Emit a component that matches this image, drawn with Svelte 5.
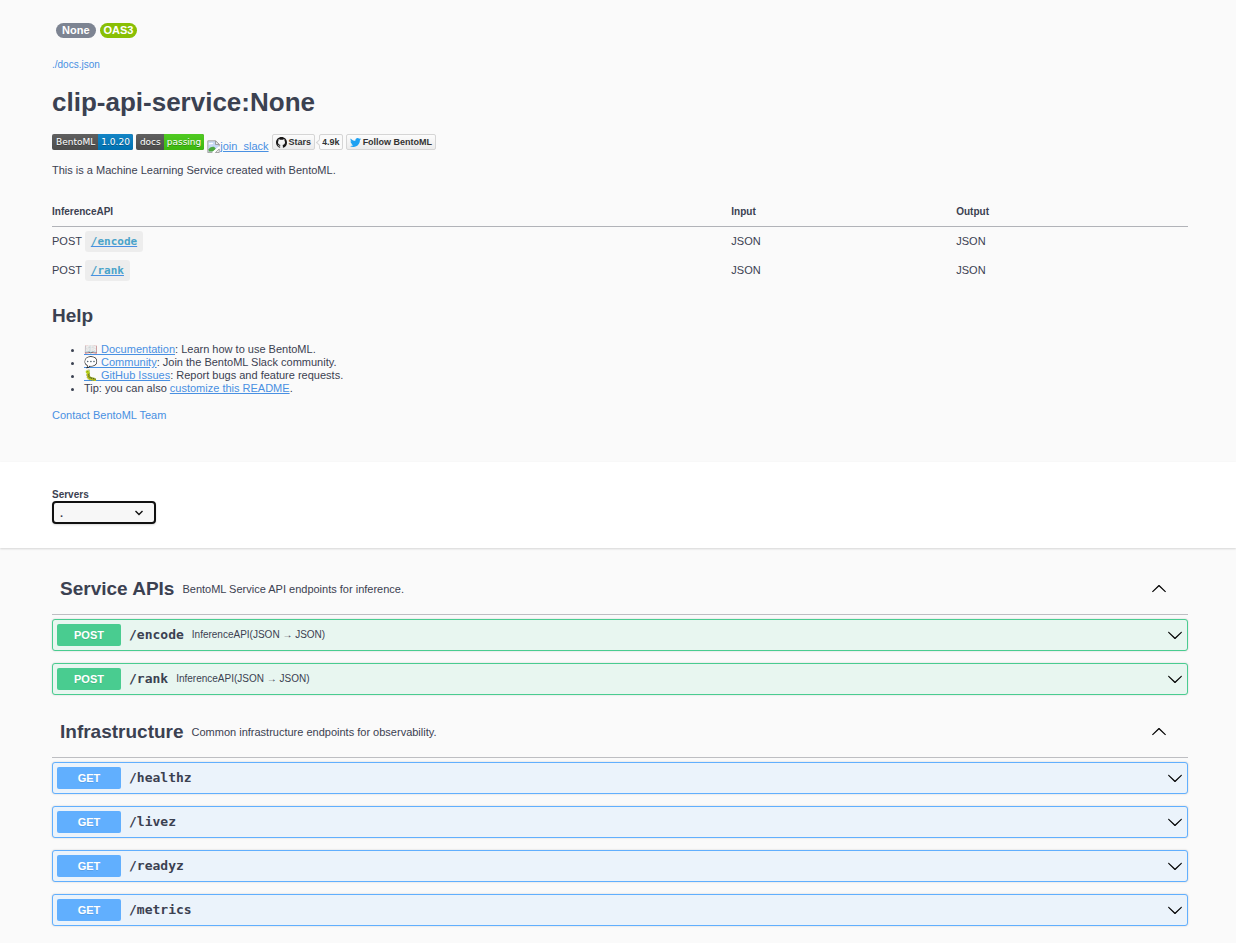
<script>
  const inference = [
    { method: 'POST', path: '/encode', input: 'JSON', output: 'JSON' },
    { method: 'POST', path: '/rank', input: 'JSON', output: 'JSON' },
  ];

  const help = [
    { before: '', link: '📖 Documentation', after: ': Learn how to use BentoML.' },
    { before: '', link: '💬 Community', after: ': Join the BentoML Slack community.' },
    { before: '', link: '🐛 GitHub Issues', after: ': Report bugs and feature requests.' },
    { before: 'Tip: you can also ', link: 'customize this README', after: '.' },
  ];

  let tags = $state([
    {
      name: 'Service APIs',
      description: 'BentoML Service API endpoints for inference.',
      open: true,
      operations: [
        { method: 'POST', path: '/encode', summary: 'InferenceAPI(JSON → JSON)' },
        { method: 'POST', path: '/rank', summary: 'InferenceAPI(JSON → JSON)' },
      ],
    },
    {
      name: 'Infrastructure',
      description: 'Common infrastructure endpoints for observability.',
      open: true,
      operations: [
        { method: 'GET', path: '/healthz', summary: '' },
        { method: 'GET', path: '/livez', summary: '' },
        { method: 'GET', path: '/readyz', summary: '' },
        { method: 'GET', path: '/metrics', summary: '' },
      ],
    },
  ]);
</script>

{#snippet chevron(up)}
  <svg class="chevron" class:up viewBox="0 0 20 20" width="16" height="16" aria-hidden="true">
    <path
      d="M17.418 6.109c.272-.268.709-.268.979 0s.271.701 0 .969l-7.908 7.83c-.27.268-.707.268-.979 0l-7.908-7.83c-.27-.268-.27-.701 0-.969.271-.268.709-.268.979 0L10 13.25l7.418-7.141z"
    />
  </svg>
{/snippet}

<main>
  <section class="info wrap">
    <div class="versions">
      <span class="pill">None</span>
      <span class="pill oas">OAS3</span>
    </div>
    <a class="spec" href="#docs">./docs.json</a>
    <h1>clip-api-service:None</h1>

    <div class="badges">
      <a class="shield" href="#pypi"><span>BentoML</span><span class="blue">1.0.20</span></a>
      <a class="shield" href="#docs"><span>docs</span><span class="green">passing</span></a>
      <a class="slack" href="#slack"
        ><svg viewBox="0 0 16 16" width="13" height="13" aria-hidden="true">
          <path d="M1.5 1.5h9l4 4v3l-7 6h-6z" fill="#c8d9f5" />
          <path d="M2 5.5c0-1.500 1.500-2 2.500-1.500C5.500 3 7.500 3.500 7.500 5z" fill="#fff" />
          <path d="M2 14v-2.500C4 8.500 6.500 8 9 8.500l2 2.500-3.500 3z" fill="#4ea83f" />
          <path d="M1 15.500V1h9.500L15 5.500V8" fill="none" stroke="#8d8d8d" />
          <path d="M10.500 1v4.500H15z" fill="#f4f4f4" stroke="#8d8d8d" />
          <path d="M1 15.500h6M10.500 15.500H15V11z" fill="none" stroke="#8d8d8d" />
          <path d="M7 15.500L15.500 8.500" fill="none" stroke="#fff" stroke-width="2" />
        </svg><span>join_slack</span></a
      >
      <a class="social" href="#github">
        <svg viewBox="0 0 16 16" width="11" height="11" aria-hidden="true">
          <path
            fill="#181717"
            d="M8 0C3.580 0 0 3.580 0 8c0 3.540 2.290 6.530 5.470 7.590.4.070.55-.17.55-.38 0-.19-.01-.82-.01-1.490-2.010.37-2.530-.49-2.690-.94-.09-.23-.48-.94-.82-1.130-.28-.15-.68-.52-.01-.53.63-.01 1.080.58 1.230.82.72 1.210 1.870.87 2.330.66.07-.52.28-.87.51-1.070-1.780-.2-3.640-.89-3.640-3.950 0-.87.31-1.590.82-2.150-.08-.2-.36-1.020.08-2.120 0 0 .67-.21 2.200.82.64-.18 1.320-.27 2-.27s1.360.09 2 .27c1.530-1.040 2.200-.82 2.200-.82.44 1.100.16 1.920.08 2.120.51.56.82 1.270.82 2.150 0 3.070-1.870 3.750-3.650 3.950.29.25.54.73.54 1.480 0 1.070-.01 1.930-.01 2.200 0 .21.15.46.55.38A8.010 8.010 0 0 0 16 8c0-4.420-3.580-8-8-8z"
          />
        </svg>
        <span>Stars</span>
      </a>
      <a class="count" href="#stargazers">4.9k</a>
      <a class="social" href="#twitter">
        <svg viewBox="0 0 24 24" width="11" height="11" aria-hidden="true">
          <path
            fill="#1da1f2"
            d="M23.954 4.569c-.885.389-1.830.654-2.825.775 1.014-.611 1.794-1.574 2.163-2.723-.951.555-2.005.959-3.127 1.184-.896-.959-2.173-1.559-3.591-1.559-2.717 0-4.920 2.203-4.920 4.917 0 .39.045.765.127 1.124C7.691 8.094 4.066 6.130 1.640 3.161c-.427.722-.666 1.561-.666 2.475 0 1.710.87 3.213 2.188 4.096-.807-.026-1.566-.248-2.228-.616v.061c0 2.385 1.693 4.374 3.946 4.827-.413.111-.849.171-1.296.171-.314 0-.615-.03-.916-.086.631 1.953 2.445 3.377 4.604 3.417-1.680 1.319-3.809 2.105-6.102 2.105-.39 0-.779-.023-1.170-.067 2.189 1.394 4.768 2.209 7.557 2.209 9.054 0 13.999-7.496 13.999-13.986 0-.209 0-.42-.015-.63.961-.689 1.800-1.560 2.460-2.548l-.047-.02z"
          />
        </svg>
        <span>Follow BentoML</span>
      </a>
    </div>

    <p>This is a Machine Learning Service created with BentoML.</p>

    <table>
      <thead>
        <tr><th class="api">InferenceAPI</th><th class="input">Input</th><th>Output</th></tr>
      </thead>
      <tbody>
        {#each inference as row}
          <tr>
            <td>{row.method} <a href={'#' + row.path}><code>{row.path}</code></a></td>
            <td>{row.input}</td>
            <td>{row.output}</td>
          </tr>
        {/each}
      </tbody>
    </table>

    <h2>Help</h2>
    <ul>
      {#each help as item}
        <li>{item.before}<a href="#help">{item.link}</a>{item.after}</li>
      {/each}
    </ul>
    <a class="contact" href="#contact">Contact BentoML Team</a>
  </section>

  <section class="scheme wrap">
    <label for="servers">Servers</label>
    <div class="select">
      <select id="servers"><option>.</option></select>
      <svg viewBox="0 0 8 6" width="8" height="6" aria-hidden="true">
        <path d="M.5 1L4 4.500 7.500 1" fill="none" stroke="#111" stroke-width="1.400" />
      </svg>
    </div>
  </section>

  <section class="operations wrap">
    {#each tags as tag}
      <h3>
        <button
          class="tag"
          aria-expanded={tag.open}
          onclick={() => (tag.open = !tag.open)}
        >
          <span class="name">{tag.name}</span>
          <span class="description">{tag.description}</span>
          {@render chevron(tag.open)}
        </button>
      </h3>
      {#if tag.open}
        <div class="list">
          {#each tag.operations as op}
            <button class="op {op.method.toLowerCase()}">
              <span class="method">{op.method}</span>
              <span class="path">{op.path}</span>
              <span class="summary">{op.summary}</span>
              {@render chevron(false)}
            </button>
          {/each}
        </div>
      {/if}
    {/each}
  </section>
</main>

<style>
  :global(body) {
    margin: 0;
    background: #fafafa;
  }

  main {
    font-family: 'Liberation Sans', Arial, sans-serif;
    font-size: 11px;
    line-height: 14px;
    color: #3b4151;
  }

  .wrap {
    padding-left: 52px;
    padding-right: 48px;
  }

  a {
    color: #4990e2;
  }

  h1,
  h2,
  h3,
  p,
  ul {
    margin: 0;
  }

  button {
    font: inherit;
    color: inherit;
    text-align: left;
    cursor: pointer;
  }

  .info {
    display: flex;
    flex-direction: column;
    align-items: flex-start;
    padding-top: 23px;
    padding-bottom: 40px;
  }

  .versions {
    display: flex;
    gap: 4px;
    padding-left: 4px;
  }

  .pill {
    padding: 0 6px;
    border-radius: 8px;
    background: #7d8492;
    color: #fff;
    font-weight: bold;
    line-height: 15px;
  }

  .pill.oas {
    padding: 0 4px;
    background: #89bf04;
  }

  .spec {
    margin-top: 21px;
    font-size: 10px;
    line-height: 12px;
    text-decoration: none;
  }

  h1 {
    margin-top: 16px;
    font-size: 26px;
    line-height: 30px;
  }

  .badges {
    display: flex;
    align-items: flex-start;
    gap: 3px;
    height: 19px;
    margin-top: 17px;
  }

  .shield {
    display: flex;
    overflow: hidden;
    border-radius: 2px;
    background: #555;
    font-family: 'DejaVu Sans', sans-serif;
    font-size: 9px;
    line-height: 16px;
    color: #fff;
    text-decoration: none;
    text-shadow: 0 1px rgba(1, 1, 1, 0.3);
  }

  .shield span {
    padding: 0 3px;
    background-image: linear-gradient(rgba(187, 187, 187, 0.1), rgba(0, 0, 0, 0.1));
  }

  .shield span:first-child {
    padding: 0 3px 0 4px;
  }

  .shield .blue {
    background-color: #007ec6;
  }

  .shield .green {
    background-color: #4c1;
  }

  .slack {
    display: flex;
    align-items: center;
    padding-top: 6px;
    line-height: 13px;
  }

  .social,
  .count {
    display: flex;
    align-items: center;
    gap: 2px;
    box-sizing: border-box;
    height: 16px;
    padding: 0 3px;
    border: 1px solid #d5d5d5;
    border-radius: 2px;
    background: linear-gradient(#fcfcfc, #ebebeb);
    color: #333;
    font-size: 9px;
    font-weight: bold;
    text-decoration: none;
  }

  .count {
    position: relative;
    margin-left: 1px;
    padding: 0 2px;
    background: #fafafa;
  }

  .count::before {
    content: '';
    position: absolute;
    left: -3px;
    top: 5px;
    width: 4px;
    height: 4px;
    border: solid #d5d5d5;
    border-width: 0 0 1px 1px;
    background: #fafafa;
    transform: rotate(45deg);
  }

  p {
    margin-top: 10px;
  }

  table {
    width: 100%;
    margin-top: 20px;
    border-collapse: collapse;
    table-layout: fixed;
  }

  th {
    height: 29px;
    padding: 0;
    border-bottom: 1px solid #b1b3b8;
    font-size: 10px;
    line-height: 12px;
    text-align: left;
  }

  th.api {
    width: 59.8%;
  }

  th.input {
    width: 19.8%;
  }

  td {
    height: 29px;
    padding: 0;
    vertical-align: baseline;
    line-height: 29px;
  }

  code {
    padding: 4px 6px;
    border-radius: 3px;
    background: rgba(0, 0, 0, 0.05);
    color: #4aa3c9;
    font-family: 'DejaVu Sans Mono', monospace;
    font-size: 11px;
    font-weight: bold;
  }

  h2 {
    margin-top: 19px;
    font-size: 19px;
    line-height: 24px;
  }

  ul {
    margin-top: 15px;
    padding-left: 32px;
  }

  li {
    height: 13px;
    line-height: 13px;
  }

  .contact {
    margin-top: 13px;
    text-decoration: none;
  }

  .scheme {
    padding-top: 27px;
    padding-bottom: 24px;
    background: #fff;
    box-shadow: 0 1px 2px rgba(0, 0, 0, 0.15);
  }

  label {
    display: block;
    font-size: 10px;
    font-weight: bold;
    line-height: 12px;
  }

  .select {
    display: inline-grid;
    align-items: center;
    vertical-align: top;
  }

  .select > * {
    grid-area: 1 / 1;
  }

  .select svg {
    justify-self: end;
    margin-right: 13px;
    pointer-events: none;
  }

  select {
    appearance: none;
    width: 104px;
    height: 23px;
    padding: 0 32px 0 6px;
    border: 2px solid #111;
    border-radius: 4px;
    background: #f7f7f7;
    box-shadow: 0 1px 2px rgba(0, 0, 0, 0.15);
    color: #3b4151;
    font: bold 11px 'Liberation Sans', Arial, sans-serif;
  }

  .operations {
    padding-top: 16px;
    padding-bottom: 4px;
  }

  .tag {
    display: flex;
    align-items: center;
    gap: 8px;
    box-sizing: border-box;
    width: 100%;
    height: 51px;
    padding: 0 21px 0 8px;
    border: 0;
    border-bottom: 1px solid #bdbec2;
    background: none;
    font-size: 11px;
    font-weight: normal;
  }

  .name {
    font-size: 19px;
    font-weight: bold;
  }

  .chevron {
    margin-left: auto;
    fill: #000;
  }

  .chevron.up {
    transform: rotate(180deg);
  }

  .list {
    display: flex;
    flex-direction: column;
    gap: 12px;
    padding: 4px 0 12px;
  }

  .op {
    display: flex;
    align-items: center;
    gap: 8px;
    box-sizing: border-box;
    height: 32px;
    padding: 4px;
    border: 1px solid;
    border-radius: 3px;
    box-shadow: 0 0 2px rgba(0, 0, 0, 0.19);
  }

  .op.post {
    border-color: #49cc90;
    background: #e8f6f0;
  }

  .op.get {
    border-color: #61affe;
    background: #ebf3fb;
  }

  .method {
    width: 64px;
    border-radius: 2px;
    color: #fff;
    font-weight: bold;
    line-height: 22px;
    text-align: center;
    text-shadow: 0 1px 0 rgba(0, 0, 0, 0.1);
  }

  .post .method {
    background: #49cc90;
  }

  .get .method {
    background: #61affe;
  }

  .path {
    font-family: 'DejaVu Sans Mono', monospace;
    font-size: 13px;
    font-weight: bold;
  }

  .summary {
    font-size: 10px;
  }
</style>
